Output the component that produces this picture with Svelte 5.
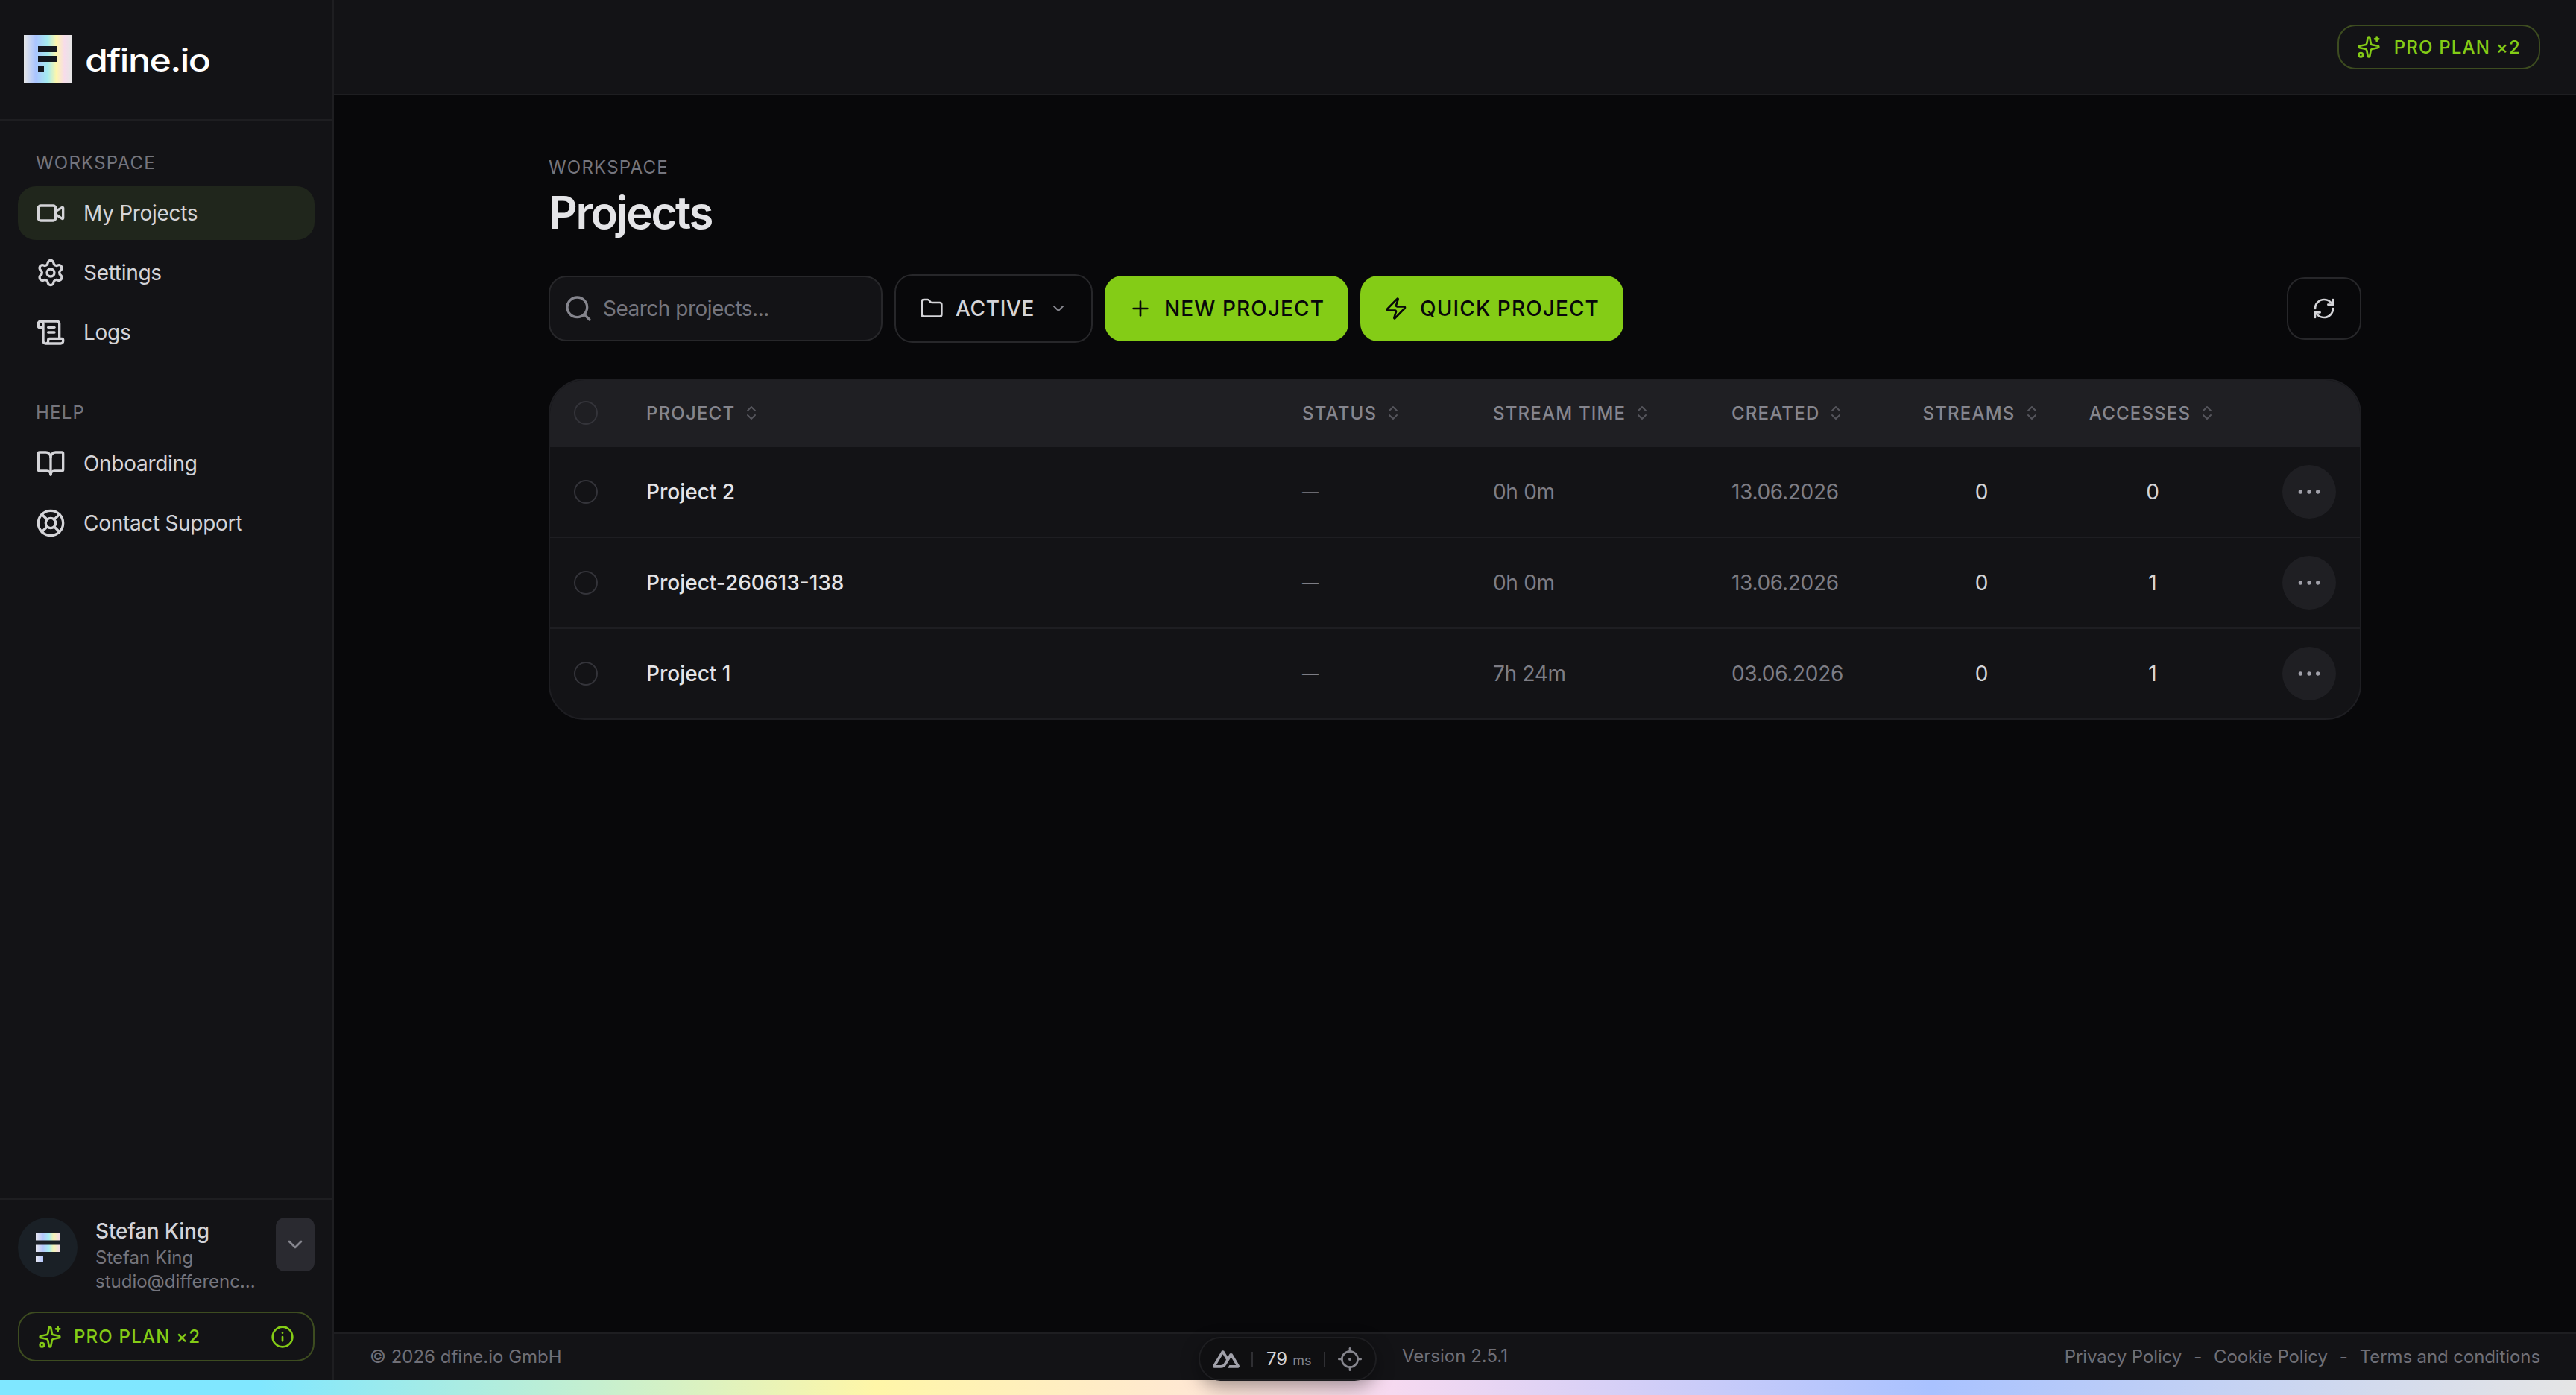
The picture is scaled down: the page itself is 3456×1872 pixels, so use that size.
<script>
	const icons = {
		video: ['m16 13 5.223 3.482a.5.5 0 0 0 .777-.416V7.87a.5.5 0 0 0-.752-.432L16 10.5', 'M4 6h10a2 2 0 0 1 2 2v8a2 2 0 0 1-2 2H4a2 2 0 0 1-2-2V8a2 2 0 0 1 2-2z'],
		settings: ['M9.671 4.136a2.34 2.34 0 0 1 4.659 0 2.34 2.34 0 0 0 3.319 1.915 2.34 2.34 0 0 1 2.33 4.033 2.34 2.34 0 0 0 0 3.831 2.34 2.34 0 0 1-2.33 4.033 2.34 2.34 0 0 0-3.319 1.915 2.34 2.34 0 0 1-4.659 0 2.34 2.34 0 0 0-3.32-1.915 2.34 2.34 0 0 1-2.33-4.033 2.34 2.34 0 0 0 0-3.831A2.34 2.34 0 0 1 6.35 6.051a2.34 2.34 0 0 0 3.319-1.915', 'M12 9a3 3 0 1 0 0 6a3 3 0 1 0 0-6'],
		logs: ['M15 12h-5', 'M15 8h-5', 'M19 17V5a2 2 0 0 0-2-2H4', 'M8 21h12a2 2 0 0 0 2-2v-1a1 1 0 0 0-1-1H11a1 1 0 0 0-1 1v1a2 2 0 1 1-4 0V5a2 2 0 1 0-4 0v2a1 1 0 0 0 1 1h3'],
		book: ['M12 7v14', 'M3 18a1 1 0 0 1-1-1V4a1 1 0 0 1 1-1h5a4 4 0 0 1 4 4 4 4 0 0 1 4-4h5a1 1 0 0 1 1 1v13a1 1 0 0 1-1 1h-6a3 3 0 0 0-3 3 3 3 0 0 0-3-3z'],
		buoy: ['M12 2a10 10 0 1 0 0 20a10 10 0 1 0 0-20', 'M12 8a4 4 0 1 0 0 8a4 4 0 1 0 0-8', 'm4.93 4.93 4.24 4.24', 'm14.83 9.17 4.24-4.24', 'm14.83 14.83 4.24 4.24', 'm9.17 14.83-4.24 4.24'],
		search: ['m21 21-4.34-4.34', 'M11 3a8 8 0 1 0 0 16a8 8 0 1 0 0-16'],
		folder: ['M20 20a2 2 0 0 0 2-2V8a2 2 0 0 0-2-2h-7.9a2 2 0 0 1-1.69-.9L9.6 3.9A2 2 0 0 0 7.93 3H4a2 2 0 0 0-2 2v13a2 2 0 0 0 2 2Z'],
		chevron: ['m6 9 6 6 6-6'],
		sort: ['m7 15 5 5 5-5', 'm7 9 5-5 5 5'],
		plus: ['M5 12h14', 'M12 5v14'],
		zap: ['M4 14a1 1 0 0 1-.78-1.63l9.9-10.2a.5.5 0 0 1 .86.46l-1.92 6.02A1 1 0 0 0 13 10h7a1 1 0 0 1 .78 1.63l-9.9 10.2a.5.5 0 0 1-.86-.46l1.92-6.02A1 1 0 0 0 11 14z'],
		refresh: ['M3 12a9 9 0 0 1 9-9 9.75 9.75 0 0 1 6.74 2.74L21 8', 'M21 3v5h-5', 'M21 12a9 9 0 0 1-9 9 9.75 9.75 0 0 1-6.74-2.74L3 16', 'M8 16H3v5'],
		sparkles: ['M11.017 2.814a1 1 0 0 1 1.966 0l1.051 5.558a2 2 0 0 0 1.594 1.594l5.558 1.051a1 1 0 0 1 0 1.966l-5.558 1.051a2 2 0 0 0-1.594 1.594l-1.051 5.558a1 1 0 0 1-1.966 0l-1.051-5.558a2 2 0 0 0-1.594-1.594l-5.558-1.051a1 1 0 0 1 0-1.966l5.558-1.051a2 2 0 0 0 1.594-1.594z', 'M20 2v4', 'M22 4h-4', 'M4 18a2 2 0 1 0 0 4a2 2 0 1 0 0-4'],
		info: ['M12 2a10 10 0 1 0 0 20a10 10 0 1 0 0-20', 'M12 16v-4', 'M12 8h.01'],
		locate: ['M12 4a8 8 0 1 0 0 16a8 8 0 1 0 0-16', 'M12 1v3', 'M12 20v3', 'M1 12h3', 'M20 12h3']
	};

	const workspaceNav = [
		{ label: 'My Projects', icon: 'video', active: true },
		{ label: 'Settings', icon: 'settings' },
		{ label: 'Logs', icon: 'logs' }
	];
	const helpNav = [
		{ label: 'Onboarding', icon: 'book' },
		{ label: 'Contact Support', icon: 'buoy' }
	];
	const columns = ['Project', 'Status', 'Stream time', 'Created', 'Streams', 'Accesses'];
	const projects = [
		{ name: 'Project 2', time: '0h 0m', created: '13.06.2026', streams: 0, accesses: 0 },
		{ name: 'Project-260613-138', time: '0h 0m', created: '13.06.2026', streams: 0, accesses: 1 },
		{ name: 'Project 1', time: '7h 24m', created: '03.06.2026', streams: 0, accesses: 1 }
	];
</script>

{#snippet icon(name, size = 40)}
	<svg class="icon" width={size} height={size} viewBox="0 0 24 24" fill="none" stroke="currentColor" stroke-width="2" stroke-linecap="round" stroke-linejoin="round">
		{#each icons[name] as d}
			<path {d} />
		{/each}
	</svg>
{/snippet}

{#snippet navLink(item)}
	<a class="nav-item" class:active={item.active} href="#top">
		{@render icon(item.icon)}
		<span>{item.label}</span>
	</a>
{/snippet}

<div class="app">
	<div class="shell">
		<aside class="sidebar">
			<div class="brand">
				<svg class="logo" width="64" height="64" viewBox="0 0 64 64">
					<defs>
						<linearGradient id="holo">
							<stop offset="0" stop-color="#e6e6e6" />
							<stop offset="0.25" stop-color="#aac4ff" />
							<stop offset="0.5" stop-color="#a5ecf0" />
							<stop offset="0.68" stop-color="#fdf6ad" />
							<stop offset="0.85" stop-color="#f7dcea" />
							<stop offset="1" stop-color="#e6e6e6" />
						</linearGradient>
					</defs>
					<rect width="64" height="64" fill="url(#holo)" />
					<rect x="19" y="15" width="26" height="8" fill="#14181f" />
					<rect x="19" y="28" width="26" height="8" fill="#14181f" />
					<rect x="19" y="41" width="8" height="8" fill="#14181f" />
				</svg>
				<span class="wordmark">dfine.io</span>
			</div>

			<nav class="nav">
				<div class="nav-title">Workspace</div>
				{#each workspaceNav as item}
					{@render navLink(item)}
				{/each}
				<div class="nav-title second">Help</div>
				{#each helpNav as item}
					{@render navLink(item)}
				{/each}
			</nav>

			<div class="account">
				<div class="user">
					<div class="avatar">
						<svg width="32" height="40" viewBox="0 0 32 40">
							<defs>
								<linearGradient id="holo2" gradientUnits="userSpaceOnUse" x1="0" x2="32" y1="0" y2="0">
									<stop offset="0" stop-color="#e6e6f0" />
									<stop offset="0.3" stop-color="#b5c8fb" />
									<stop offset="0.55" stop-color="#a8ecf2" />
									<stop offset="0.75" stop-color="#f6f3b4" />
									<stop offset="1" stop-color="#f3dbe8" />
								</linearGradient>
							</defs>
							<rect y="1" width="32" height="9.5" fill="url(#holo2)" />
							<rect y="16.500" width="32" height="9.5" fill="url(#holo2)" />
							<rect y="31.5" width="10" height="9" fill="url(#holo2)" />
						</svg>
					</div>
					<div class="user-text">
						<div class="user-name">Stefan King</div>
						<div class="user-sub">Stefan King</div>
						<div class="user-sub">studio@differenc...</div>
					</div>
					<button class="user-toggle" aria-label="Open account menu">
						{@render icon('chevron', 32)}
					</button>
				</div>
				<div class="plan plan-wide">
					{@render icon('sparkles', 32)}
					<span>PRO PLAN ×2</span>
					<span class="plan-info">{@render icon('info', 32)}</span>
				</div>
			</div>
		</aside>

		<div class="content">
			<header class="topbar">
				<div class="plan">
					{@render icon('sparkles', 32)}
					<span>PRO PLAN ×2</span>
				</div>
			</header>

			<main class="main">
				<div class="eyebrow">Workspace</div>
				<h1 class="title">Projects</h1>

				<div class="toolbar">
					<label class="search">
						<span class="search-icon">{@render icon('search', 40)}</span>
						<input placeholder="Search projects..." />
					</label>
					<button class="btn btn-outline">
						{@render icon('folder', 32)}
						<span>ACTIVE</span>
						<span class="btn-chevron">{@render icon('chevron', 24)}</span>
					</button>
					<button class="btn btn-primary">
						{@render icon('plus', 32)}
						<span>NEW PROJECT</span>
					</button>
					<button class="btn btn-primary quick">
						{@render icon('zap', 32)}
						<span>QUICK PROJECT</span>
					</button>
					<button class="btn-refresh" aria-label="Refresh">
						{@render icon('refresh', 32)}
					</button>
				</div>

				<div class="table-wrap">
					<table>
						<colgroup>
							<col style="width: 97px" />
							<col style="width: 880px" />
							<col style="width: 256px" />
							<col style="width: 320px" />
							<col style="width: 256px" />
							<col style="width: 223px" />
							<col style="width: 236px" />
							<col style="width: 160px" />
						</colgroup>
						<thead>
							<tr>
								<th><span class="check"></span></th>
								{#each columns as col, i}
									<th class:center={i > 3}>
										<span class="th-inner">
											{col}
											<span class="sort">{@render icon('sort', 24)}</span>
										</span>
									</th>
								{/each}
								<th></th>
							</tr>
						</thead>
						<tbody>
							{#each projects as p}
								<tr>
									<td><span class="check"></span></td>
									<td class="name">{p.name}</td>
									<td class="muted dash">—</td>
									<td class="muted">{p.time}</td>
									<td class="muted">{p.created}</td>
									<td class="center">{p.streams}</td>
									<td class="center">{p.accesses}</td>
									<td class="actions">
										<button class="more" aria-label="More actions">
											<svg width="40" height="40" viewBox="0 0 24 24" fill="currentColor">
												<circle cx="5" cy="12" r="1.6" />
												<circle cx="12" cy="12" r="1.6" />
												<circle cx="19" cy="12" r="1.6" />
											</svg>
										</button>
									</td>
								</tr>
							{/each}
						</tbody>
					</table>
				</div>
			</main>

			<footer class="footer">
				<span>© 2026 dfine.io GmbH</span>
				<div class="footer-links">
					<a href="#top">Privacy Policy</a>
					<span>-</span>
					<a href="#top">Cookie Policy</a>
					<span>-</span>
					<a href="#top">Terms and conditions</a>
				</div>
				<span class="version">Version 2.5.1</span>
				<div class="devbar">
					<svg class="nuxt" width="36" height="36" viewBox="0 0 24 24" fill="currentColor">
						<path d="M13.4642 19.8295h8.9218c.2834 0 .5618-.0723.8072-.2098a1.5899 1.5899 0 0 0 .5908-.5732 1.5293 1.5293 0 0 0 .216-.783 1.529 1.529 0 0 0-.2167-.7828L17.7916 7.4142a1.5904 1.5904 0 0 0-.5907-.573 1.6524 1.6524 0 0 0-.807-.2099c-.2833 0-.5616.0724-.807.2098a1.5904 1.5904 0 0 0-.5907.5731L13.4642 9.99l-2.9954-5.0366a1.5913 1.5913 0 0 0-.591-.573 1.6533 1.6533 0 0 0-.8071-.2098c-.2834 0-.5617.0723-.8072.2097a1.5913 1.5913 0 0 0-.591.573L.2168 17.4808A1.5292 1.5292 0 0 0 0 18.2635c-.0001.2749.0744.545.216.783a1.59 1.59 0 0 0 .5908.5732c.2454.1375.5238.2098.8072.2098h5.6003c2.219 0 3.8554-.9454 4.9813-2.7899l2.7337-4.5922L16.3935 9.99l4.3944 7.382h-5.8586ZM7.123 17.3694l-3.9083-.0009 5.8586-9.8421 2.9232 4.921-1.9572 3.2892c-.7478 1.1967-1.5972 1.6328-2.9163 1.6328z" />
					</svg>
					<i class="sep"></i>
					<span class="ms"><b>79</b> ms</span>
					<i class="sep"></i>
					<span class="locate">
						{@render icon('locate', 32)}
						<i class="dot"></i>
					</span>
				</div>
			</footer>
		</div>
	</div>
	<div class="rainbow"></div>
</div>

<style>
	:global(body) {
		margin: 0;
		background: #08080a;
		overflow: hidden;
	}

	.app {
		height: 100vh;
		display: flex;
		flex-direction: column;
		font-family: Inter, "Liberation Sans", sans-serif;
		color: #d4d4d8;
		background: #08080a;
	}

	.shell {
		flex: 1;
		min-height: 0;
		display: flex;
	}

	.icon {
		display: block;
		flex: none;
	}

	/* sidebar */
	.sidebar {
		width: 448px;
		box-sizing: border-box;
		flex: none;
		display: flex;
		flex-direction: column;
		background: #131316;
		border-right: 2px solid #1e1e21;
	}

	.brand {
		height: 162px;
		box-sizing: border-box;
		padding-left: 32px;
		padding-bottom: 2px;
		display: flex;
		align-items: center;
		gap: 18px;
		border-bottom: 2px solid #1e1e21;
	}

	.logo {
		display: block;
		flex: none;
	}

	.wordmark {
		font-size: 41px;
		font-weight: 500;
		color: #fff;
		line-height: 1;
		letter-spacing: -1.3px;
		transform: scaleX(1.22);
		transform-origin: left center;
		padding-top: 4px;
	}

	.nav {
		flex: 1;
		padding: 41px 24px 0;
		display: flex;
		flex-direction: column;
		gap: 8px;
	}

	.nav-title {
		font-size: 24px;
		line-height: 32px;
		letter-spacing: 0.05em;
		text-transform: uppercase;
		color: #75757d;
		padding-left: 24px;
		margin-bottom: 7px;
	}

	.nav-title.second {
		margin-top: 48px;
		margin-bottom: 8px;
	}

	.nav-item {
		height: 72px;
		display: flex;
		align-items: center;
		gap: 24px;
		padding-left: 24px;
		border-radius: 24px;
		font-size: 28px;
		letter-spacing: -0.3px;
		color: #d4d4d8;
		text-decoration: none;
	}

	.nav-item.active {
		background: #20261c;
	}

	.account {
		border-top: 2px solid #1e1e21;
		padding: 24px 24px 25px;
		display: flex;
		flex-direction: column;
		gap: 24px;
	}

	.user {
		display: flex;
		gap: 24px;
		align-items: flex-start;
	}

	.avatar {
		width: 80px;
		height: 80px;
		border-radius: 50%;
		background: #1a2026;
		flex: none;
		display: flex;
		align-items: center;
		justify-content: center;
	}

	.avatar svg {
		display: block;
	}

	.user-text {
		flex: 1;
		min-width: 0;
		margin-top: -2px;
	}

	.user-name {
		font-size: 28px;
		line-height: 40px;
		font-weight: 500;
		letter-spacing: -0.2px;
		color: #d4d4d8;
	}

	.user-sub {
		font-size: 24px;
		line-height: 32px;
		color: #75757d;
		white-space: nowrap;
	}

	.user-toggle {
		width: 52px;
		height: 72px;
		flex: none;
		padding: 0;
		border: 0;
		border-radius: 12px;
		background: #2a2a30;
		color: #85858d;
		display: flex;
		align-items: center;
		justify-content: center;
	}

	.plan {
		display: flex;
		align-items: center;
		gap: 18px;
		height: 60px;
		padding: 0 24px;
		border: 2px solid #3d4c20;
		border-radius: 24px;
		color: #84cc16;
		font-size: 24px;
		font-weight: 500;
		letter-spacing: 0.05em;
		white-space: nowrap;
		box-sizing: border-box;
	}

	.plan-wide {
		height: 67px;
		padding: 0 25px;
		gap: 16px;
	}

	.plan-info {
		margin-left: auto;
	}

	/* main column */
	.content {
		flex: 1;
		min-width: 0;
		display: flex;
		flex-direction: column;
		position: relative;
	}

	.topbar {
		height: 128px;
		box-sizing: border-box;
		flex: none;
		display: flex;
		align-items: center;
		justify-content: flex-end;
		padding: 0 48px 0;
		background: #131316;
		border-bottom: 2px solid #1e1e21;
	}

	.main {
		flex: 1;
		min-height: 0;
		padding: 81px 288px 0;
	}

	.eyebrow {
		font-size: 24px;
		line-height: 32px;
		letter-spacing: 0.05em;
		text-transform: uppercase;
		color: #75757d;
	}

	.title {
		margin: 8px 0 47px;
		font-size: 60px;
		line-height: 72px;
		font-weight: 600;
		letter-spacing: -2.3px;
		color: #e4e4e7;
	}

	.toolbar {
		height: 92px;
		display: flex;
		align-items: center;
		gap: 16px;
		margin-bottom: 48px;
	}

	.search {
		width: 448px;
		height: 88px;
		box-sizing: border-box;
		display: flex;
		align-items: center;
		gap: 13px;
		padding-left: 18px;
		background: #131316;
		border: 2px solid #27272a;
		border-radius: 24px;
	}

	.search-icon {
		color: #85858d;
	}

	.search input {
		flex: 1;
		min-width: 0;
		border: 0;
		outline: 0;
		background: none;
		font: inherit;
		font-size: 28px;
		letter-spacing: -0.5px;
		color: #d4d4d8;
		padding: 0;
	}

	.search input::placeholder {
		color: #75757d;
		opacity: 1;
	}

	.btn {
		height: 88px;
		box-sizing: border-box;
		display: flex;
		align-items: center;
		gap: 16px;
		padding: 0 32px;
		border: 0;
		border-radius: 24px;
		font: inherit;
		font-size: 28px;
		font-weight: 500;
		letter-spacing: 1.1px;
		white-space: nowrap;
	}

	.btn-outline {
		height: 92px;
		width: 266px;
		background: none;
		border: 2px solid #27272a;
		color: #d4d4d8;
		letter-spacing: 0.7px;
	}

	.btn-chevron {
		color: #85858d;
		margin-left: 4px;
	}

	.btn-primary {
		background: #84cc16;
		color: #08080a;
	}

	.btn-refresh {
		margin-left: auto;
		width: 100px;
		height: 84px;
		padding: 0;
		background: none;
		border: 2px solid #27272a;
		border-radius: 24px;
		color: #d4d4d8;
		display: flex;
		align-items: center;
		justify-content: center;
	}

	/* table */
	.table-wrap {
		box-sizing: border-box;
		width: 2432px;
		border: 2px solid #1e1e22;
		border-radius: 48px;
		overflow: hidden;
		background: #131316;
	}

	table {
		width: 100%;
		table-layout: fixed;
		border-collapse: separate;
		border-spacing: 0;
	}

	th,
	td {
		padding: 0 32px;
		text-align: left;
		box-sizing: border-box;
	}

	th {
		height: 90px;
		padding-bottom: 2px;
		background: #1f1f23;
		font-size: 24px;
		font-weight: 500;
		letter-spacing: 0.05em;
		text-transform: uppercase;
		color: #85858d;
	}

	.th-inner {
		display: inline-flex;
		align-items: center;
		gap: 10px;
		white-space: nowrap;
	}

	.sort {
		color: #55555c;
	}

	td {
		height: 122px;
		font-size: 28px;
		color: #d4d4d8;
		border-bottom: 2px solid #1e1e22;
	}

	tbody tr:last-child td {
		height: 120px;
		border-bottom: 0;
	}

	td.name {
		font-weight: 500;
		color: #e4e4e7;
	}

	td.muted {
		color: #7d7d85;
		letter-spacing: -0.3px;
	}

	td.dash {
		font-size: 22px;
	}

	th.center,
	td.center {
		text-align: center;
	}

	.actions {
		text-align: right;
	}

	.check {
		display: block;
		width: 32px;
		height: 32px;
		box-sizing: border-box;
		border: 2px solid #34343a;
		border-radius: 50%;
	}

	.more {
		width: 72px;
		height: 72px;
		padding: 0;
		border: 0;
		border-radius: 50%;
		background: #1f1f23;
		color: #a1a1aa;
		display: inline-flex;
		align-items: center;
		justify-content: center;
		vertical-align: middle;
	}

	/* footer */
	.footer {
		height: 64px;
		box-sizing: border-box;
		flex: none;
		display: flex;
		align-items: center;
		justify-content: space-between;
		padding: 0 48px 2px;
		background: #131316;
		border-top: 2px solid #1e1e21;
		font-size: 24px;
		color: #6f6f77;
		position: relative;
	}

	.footer a {
		color: inherit;
		text-decoration: none;
	}

	.footer-links {
		display: flex;
		gap: 16px;
		letter-spacing: -0.1px;
	}

	/* sits next to the dev pill, independent of the left/right footer text */
	.version {
		position: absolute;
		left: 1433px;
		top: 15px;
	}

	.devbar {
		position: absolute;
		left: 1160px;
		top: 4px;
		width: 239px;
		height: 59px;
		box-sizing: border-box;
		z-index: 2;
		display: flex;
		align-items: center;
		padding: 0 17px;
		background: #0f0f11;
		border: 2px solid #1e1e21;
		border-radius: 40px;
		box-shadow: 0 8px 24px rgba(0, 0, 0, 0.35);
		color: #a1a1aa;
	}

	.nuxt {
		display: block;
		flex: none;
	}

	.sep {
		width: 2px;
		height: 20px;
		background: #2f2f33;
		flex: none;
		margin: 0 18px 0 16px;
	}

	.ms {
		font-size: 18px;
		color: #85858d;
		white-space: nowrap;
		width: 58px;
	}

	.ms b {
		font-size: 24px;
		font-weight: 400;
		color: #d4d4d8;
		margin-right: 2px;
	}

	.ms + .sep {
		margin: 0 17px 0 19px;
	}

	.locate {
		position: relative;
		color: #85858d;
		display: block;
	}

	.dot {
		position: absolute;
		left: 14px;
		top: 14px;
		width: 4px;
		height: 4px;
		border-radius: 50%;
		background: currentColor;
	}

	.rainbow {
		height: 20px;
		flex: none;
		background: linear-gradient(90deg, #7fe7ff 0%, #80e7ff 10%, #fff6a8 34%, #ffe8d2 46%, #f6d9f0 54%, #a9c2ff 75%, #e5e5e5 100%);
	}
</style>
